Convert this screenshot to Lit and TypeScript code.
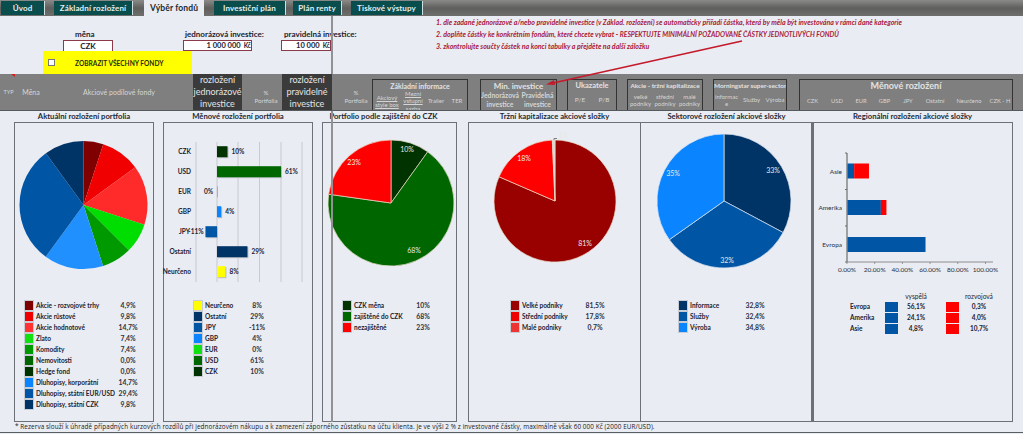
import { LitElement, html, css, svg } from "lit";
import { customElement } from "lit/decorators.js";

const C = { dred: "#7f0000", red: "#f00000", lred: "#ff2a2a", lime: "#00e000", green2: "#009900", green: "#006600", dgreen: "#003300", sky: "#0a84ff", blue: "#0055a5", navy: "#003366", yellow: "#ffff00" };

type Slice = [number, string];
type Lab = [string, number, number];

function pie(cx: number, cy: number, r: number, slices: Slice[], sep: string, labels: Lab[] = []) {
  const total = slices.reduce((a, s) => a + s[0], 0);
  let acc = 0;
  const paths = slices.filter((s) => s[0] > 0).map(([v, col]) => {
    const a0 = (acc / total) * 2 * Math.PI;
    acc += v;
    const a1 = (acc / total) * 2 * Math.PI;
    const p = (a: number) => `${(cx + r * Math.sin(a)).toFixed(2)} ${(cy - r * Math.cos(a)).toFixed(2)}`;
    const large = a1 - a0 > Math.PI ? 1 : 0;
    return svg`<path d="M${cx} ${cy}L${p(a0)}A${r} ${r} 0 ${large} 1 ${p(a1)}Z" fill=${col} stroke=${sep} stroke-width=${sep === "none" ? 0 : 0.7}></path>`;
  });
  const ls = labels.map(([t, x, y]) => svg`<text class="pl" x=${x} y=${y} text-anchor="middle">${t}</text>`);
  return svg`${paths}${ls}`;
}

function chart(x0: number, w: number, h: number, content: unknown) {
  return html`<svg class="chart" width=${w} height=${h} viewBox="${x0} 123 ${w} ${h}">${content}</svg>`;
}

const bars: [string, number, string][] = [
  ["CZK", 10, C.dgreen], ["USD", 61, C.green], ["EUR", 0, C.lime], ["GBP", 4, C.sky],
  ["JPY", -11, C.blue], ["Ostatní", 29, C.navy], ["Neurčeno", 8, C.yellow],
];

function barChart() {
  const grid = [196, 217, 238, 259.5, 281, 302].map((x) => svg`<line x1=${x} x2=${x} y1="142" y2="282" stroke="#bfc1c4" stroke-width="0.8"></line>`);
  const rows = bars.map(([n, v, col], i) => {
    const y = 151.7 + i * 20;
    const bx = v < 0 ? 217 + v * 1.05 : 217;
    const bw = Math.abs(v) * 1.05;
    return svg`
      <rect x=${bx + 1} y=${y - 4.5} width=${bw} height="11" fill="#b9bec6"></rect>
      <rect x=${bx} y=${y - 5.5} width=${Math.max(bw, 0.5)} height="11" fill=${col}></rect>
      <text class="bl" x=${i === 4 ? 190 : 191} y=${y + 2} text-anchor="end">${n}</text>
      ${v < 0
        ? svg`<text class="bl" x="203.5" y=${y + 2.4} text-anchor="end">${v}%</text>`
        : v === 0
        ? svg`<text class="bl" x="213" y=${y + 2.4} text-anchor="end">0%</text>`
        : svg`<text class="bl" x=${217 + bw + 4} y=${y + 2.4}>${v}%</text>`}`;
  });
  return svg`${grid}${rows}`;
}

function regional() {
  const sc = 1.385;
  const data: [string, number, number, number][] = [["Asie", 171, 4.8, 10.7], ["Amerika", 207.5, 24.1, 4], ["Evropa", 244.5, 56.1, 0.3]];
  const ticks = [0, 20, 40, 60, 80, 100];
  return svg`
    <line x1="847" x2="847" y1="153" y2="262" stroke="#555" stroke-width="1"></line>
    <line x1="847" x2="993" y1="262" y2="262" stroke="#777" stroke-width="0.8"></line>
    ${[153, 189.5, 226, 262].map((y) => svg`<line x1="845" x2="847" y1=${y} y2=${y} stroke="#555" stroke-width="0.8"></line>`)}
    ${ticks.map((t) => svg`
      <line x1=${847 + t * sc} x2=${847 + t * sc} y1="262" y2="264" stroke="#777" stroke-width="0.7"></line>
      <text class="rl" x=${847 + t * sc} y="271.5" text-anchor="middle">${t}.00%</text>`)}
    ${data.map(([n, y, a, b]) => svg`
      <text class="rl" x="842" y=${y + 2.5} text-anchor="end">${n}</text>
      <rect x="847.5" y=${y - 7.5} width=${a * sc} height="15" fill=${C.blue}></rect>
      <rect x=${847.5 + a * sc} y=${y - 7.5} width=${b * sc} height="15" fill="#ff0000"></rect>`)}`;
}

type Row = [string, string, string];
const leg1: Row[] = [
  [C.dred, "Akcie - rozvojové trhy", "4,9%"], ["#ee0000", "Akcie růstové", "9,8%"], ["#ff3333", "Akcie hodnotové", "14,7%"],
  ["#11e011", "Zlato", "7,4%"], [C.green2, "Komodity", "7,4%"], [C.green, "Nemovitosti", "0,0%"], [C.dgreen, "Hedge fond", "0,0%"],
  [C.sky, "Dluhopisy, korporátní", "14,7%"], [C.blue, "Dluhopisy, státní EUR/USD", "29,4%"], [C.navy, "Dluhopisy, státní CZK", "9,8%"],
];
const leg2: Row[] = [
  [C.yellow, "Neurčeno", "8%"], [C.navy, "Ostatní", "29%"], [C.blue, "JPY", "-11%"], [C.sky, "GBP", "4%"],
  ["#11e011", "EUR", "0%"], [C.green, "USD", "61%"], [C.dgreen, "CZK", "10%"],
];
const leg3: Row[] = [[C.dgreen, "CZK měna", "10%"], [C.green, "zajištěné do CZK", "68%"], ["#ff0000", "nezajištěné", "23%"]];
const leg4: Row[] = [["#990000", "Velké podniky", "81,5%"], ["#ee0000", "Střední podniky", "17,8%"], ["#ee3333", "Malé podniky", "0,7%"]];
const leg5: Row[] = [[C.navy, "Informace", "32,8%"], [C.blue, "Služby", "32,4%"], [C.sky, "Výroba", "34,8%"]];

function legend(rows: Row[], left: number, textW: number) {
  return html`<div class="legend" style="margin-left:${left}px;grid-template-columns:10px ${textW}px 28px">
    ${rows.map(([c, t, v]) => html`<span class="sw" style="background:${c}"></span><span class="lt">${t}</span><span class="lv">${v}</span>`)}
  </div>`;
}

const tabs: [string, number, number, boolean][] = [
  ["Úvod", 44, 1, false], ["Základní rozložení", 79, 9, false], ["Výběr fondů", 60, 11, true],
  ["Investiční plán", 72, 10, false], ["Plán renty", 49, 7, false], ["Tiskové výstupy", 72, 9, false],
];

const groups = [
  { cls: "g1", title: "Základní informace", cols: [["Akciový", "style box"], ["Mezní", "vstupní", "sazba"], ["Trailer"], ["TER"]] },
  { cls: "g2", title: "Min. investice", cols: [["Jednorázová", "investice"], ["Pravidelná", "investice"]] },
  { cls: "g3", title: "Ukazatele", cols: [["P/E"], ["P/B"]] },
  { cls: "g4", title: "Akcie - tržní kapitalizace", cols: [["velké", "podniky"], ["střední", "podniky"], ["malé", "podniky"]] },
  { cls: "g5", title: "Morningstar super-sector", cols: [["informac", "e"], ["Služby"], ["Výroba"]] },
  { cls: "g6", title: "Měnové rozložení", cols: [["CZK"], ["USD"], ["EUR"], ["GBP"], ["JPY"], ["Ostatní"], ["Neurčeno"], ["CZK - H"]] },
];

@customElement("app-root")
export class AppRoot extends LitElement {
  static styles = css`
    :host { display: block; position: relative; width: 1023px; height: 434px; overflow: hidden; background: #e9ecf3; font-family: "Lato", "Liberation Sans", sans-serif; color: #1c2230; }
    * { box-sizing: border-box; }
    .tabs { display: flex; height: 16px; background: linear-gradient(#8a8a88, #5f5f5e 50%, #6e6e6d); }
    .tab { height: 14px; margin-top: 1px; background: #0a4d4d; color: #e4eeee; font-size: 8px; font-weight: 700; letter-spacing: .12px; display: flex; align-items: center; justify-content: center; white-space: nowrap; border-right: 1px solid #cfe0e0; }
    .tab.on { background: #e9ecf3; color: #1c2a30; height: 16px; margin-top: 0; border: 0; font-size: 8.5px; }
    .top { display: flex; height: 58px; }
    .form { width: 332px; display: flex; flex-direction: column; }
    .fields { display: flex; padding-top: 13px; height: 35px; }
    .f { display: flex; flex-direction: column; font-size: 8px; font-weight: 700; white-space: nowrap; }
    .f1 { margin-left: 63px; width: 50px; }
    .f2 { margin-left: 70px; width: 69px; }
    .f3 { margin-left: 29px; width: 50px; }
    .f label { height: 11px; line-height: 11px; }
    .f1 label { padding-left: 12px; }
    .f2 label { padding-left: 2px; }
    .f3 label { padding-left: 3px; }
    .inp { height: 12px; background: #fff; border: 1px solid #8b3a4a; font-size: 7.5px; display: flex; align-items: center; justify-content: flex-end; gap: 3px; padding-right: 0; }
    .inp.c { justify-content: center; font-size: 8px; }
    .inp small { font-size: 6.5px; }
    .yellow { margin-left: 43px; width: 149px; height: 23px; background: #ffff00; display: flex; align-items: center; font-size: 6.6px; font-weight: 700; color: #2a2a10; }
    .yellow i { width: 7px; height: 7px; margin: 0 20px 0 5px; background: #fff; border: 1px solid #777; }
    .notes { padding-left: 104px; font-size: 7.02px; font-style: italic; font-weight: 700; color: #a8203a; }
    .notes div { height: 12px; line-height: 12px; white-space: nowrap; }
    .notes b { font-weight: 700; font-size: 6.7px; }

    .head { position: relative; z-index: 1; display: flex; height: 36px; background: #7f7f7f; color: #d6d6d6; }
    .hc { display: flex; align-items: center; justify-content: center; text-align: center; font-size: 7px; white-space: nowrap; }
    .h1 { width: 17px; font-size: 5.5px; }
    .h2 { width: 28px; }
    .h3 { width: 148px; }
    .dark { width: 49px; background: #3b3b3b; color: #e4e4e4; font-size: 9px; line-height: 11.7px; }
    .dark.d2 { width: 50px; }
    .pct { width: 40px; padding-left: 8px; font-size: 6.2px; line-height: 8px; padding-top: 10px; }
    .groups { display: flex; align-items: flex-start; }
    .grp { height: 31px; margin-top: 5px; border: 1px solid #333; border-bottom: 0; overflow: hidden; display: flex; flex-direction: column; text-align: center; }
    .grp h4 { margin: 0; font-size: 7px; font-weight: 700; color: #e2e2e2; line-height: 10px; height: 10px; padding-top: 1px; white-space: nowrap; }
    .cols { display: grid; flex: 1; align-items: center; font-size: 6px; line-height: 7.3px; }
    .cols span { display: block; white-space: nowrap; }
    .g1 { width: 96px; margin-right: 12px; } .g1 .cols { grid-template-columns: 28px 24px 22px 20px; }
    .g1 .cols > div:nth-child(-n+2) { text-decoration: underline; }
    .g1 .cols > div:nth-child(2) { align-self: start; }
    .g2 { width: 77px; margin-right: 10px; } .g2 .cols { grid-template-columns: 38px 37px; font-size: 6.8px; font-weight: 700; line-height: 9px; }
    .g2 h4 { font-size: 8px; }
    .g3 { width: 50px; margin-right: 10px; } .g3 .cols { grid-template-columns: 24px 24px; font-size: 6.5px; }
    .g3 h4 { font-size: 7.5px; }
    .g4 { width: 76px; margin-right: 10px; } .g4 .cols { grid-template-columns: 25px 24px 25px; }
    .g4 h4 { font-size: 6.4px; }
    .g5 { width: 74px; margin-right: 12px; } .g5 .cols { grid-template-columns: 25px 25px 22px; }
    .g5 h4 { font-size: 6.4px; }
    .g6 { width: 214px; } .g6 .cols { grid-template-columns: 25px 24px 24px 23px 24px 30px 38px 24px; font-size: 5.8px; }
    .g6 h4 { font-size: 9px; height: 12px; }

    .main { display: grid; grid-template-columns: 149px 159px 146px 173px 171px 201px; margin-left: 14px; }
    .rule { position: relative; z-index: 1; height: 1px; background: #555a5f; }
    .col { display: flex; flex-direction: column; }
    .c1 { width: 140px; } .c2 { width: 150px; } .c3 { width: 135px; }
    .title { height: 11px; line-height: 11px; font-size: 7.7px; font-weight: 700; text-align: center; white-space: nowrap; color: #222a36; }
    .c3 .title { padding-right: 12px; }
    .panel { height: 300px; border: 1px solid #6b7176; }
    .p5 { border-left: 0; }
    .p6 { border-left: 2px solid #6b7176; }
    .chart { display: block; overflow: visible; }
    .chart text { font-family: "Lato", sans-serif; }
    .pl { font-size: 7px; fill: #e8e8e8; }
    .bl { font-size: 6.5px; font-weight: 700; fill: #1c2230; }
    .rl { font-size: 6.5px; fill: #2a3040; }
    .legend { display: grid; grid-auto-rows: 11px; }
    .sw { height: 11px; border: .5px solid #c8ccd4; }
    .lt { padding-left: 2px; font-size: 6.5px; font-weight: 700; line-height: 11px; white-space: nowrap; }
    .lv { text-align: center; font-size: 6.8px; font-weight: 700; line-height: 11px; color: #2a3040; }
    .reg { display: grid; margin-left: 36px; grid-template-columns: 35px 13px 36px 12px 13px 40px; grid-auto-rows: 11px; align-items: center; font-size: 6.5px; font-weight: 700; }
    .reg .hd { font-weight: 400; text-align: center; font-size: 6.6px; }
    .reg .v { text-align: center; }
    .reg .sq { height: 10px; }
    .foot { height: 10px; margin-left: 15px; font-family: "Open Sans", sans-serif; font-size: 6.35px; line-height: 10px; white-space: nowrap; color: #222; letter-spacing: .09px; }
    .endline { height: 1px; background: #5a5f63; }
    .freeze { position: absolute; left: 331px; top: 16px; width: 2px; height: 406px; background: #909296; }
    .arrow { position: absolute; z-index: 2; left: 0; top: 0; pointer-events: none; }
    .flag { position: absolute; z-index: 2; left: 11px; top: 74px; width: 0; height: 0; border-top: 3px solid #d02020; border-left: 4px solid transparent; }
  `;

  render() {
    return html`
      <div class="tabs">
        ${tabs.map(([t, w, m, on]) => html`<div class="tab ${on ? "on" : ""}" style="width:${w}px;margin-left:${m}px">${t}</div>`)}
      </div>
      <div class="top">
        <div class="form">
          <div class="fields">
            <div class="f f1"><label>měna</label><div class="inp c">CZK</div></div>
            <div class="f f2"><label>jednorázová investice:</label><div class="inp"><span>1 000 000</span><small>Kč</small></div></div>
            <div class="f f3"><label>pravidelná investice:</label><div class="inp"><span>10 000</span><small>Kč</small></div></div>
          </div>
          <div class="yellow"><i></i>ZOBRAZIT VŠECHNY FONDY</div>
        </div>
        <div class="notes">
          <div>1. dle zadané jednorázové a/nebo pravidelné investice (v Základ. rozložení) se automaticky přiřadí částka, která by měla být investována v rámci dané kategorie</div>
          <div>2. doplňte částky ke konkrétním fondům, které chcete vybrat - <b>RESPEKTUJTE MINIMÁLNÍ POŽADOVANÉ ČÁSTKY JEDNOTLIVÝCH FONDŮ</b></div>
          <div>3. zkontrolujte součty částek na konci tabulky a přejděte na další záložku</div>
        </div>
      </div>
      <div class="head">
        <div class="hc h1">TYP</div><div class="hc h2">Měna</div><div class="hc h3">Akciové podílové fondy</div>
        <div class="hc dark">rozložení<br />jednorázové<br />investice</div>
        <div class="hc pct">%<br />Portfolia</div>
        <div class="hc dark d2">rozložení<br />pravidelné<br />investice</div>
        <div class="hc pct">%<br />Portfolia</div>
        <div class="groups">
          ${groups.map((g) => html`<div class="grp ${g.cls}"><h4>${g.title}</h4>
            <div class="cols">${g.cols.map((c) => html`<div>${c.map((l) => html`<span>${l}</span>`)}</div>`)}</div></div>`)}
        </div>
      </div>
      <div class="rule"></div>
      <div class="main">
        <div class="col c1"><div class="title">Aktuální rozložení portfolia</div>
          <div class="panel">
            ${chart(15, 138, 177, pie(83.5, 205, 64, [[4.9, C.dred], [9.8, C.red], [14.7, C.lred], [7.4, "#00dd00"], [7.4, C.green2], [14.7, "#2090ff"], [29.4, C.blue], [9.8, C.navy]], "none"))}
            ${legend(leg1, 9, 80)}
          </div></div>
        <div class="col c2"><div class="title">Měnové rozložení portfolia</div>
          <div class="panel">
            ${chart(164, 148, 177, barChart())}
            ${legend(leg2, 29, 40)}
          </div></div>
        <div class="col c3"><div class="title">Portfolio podle zajištění do CZK</div>
          <div class="panel">
            ${chart(323, 133, 177, pie(391, 203, 63, [[10, C.dgreen], [68, C.green], [23, "#ff0000"]], "#e8dcc8", [["10%", 407, 152], ["68%", 414, 252.5], ["23%", 354, 164.5]]))}
            ${legend(leg3, 19, 57)}
          </div></div>
        <div class="col"><div class="title">Tržní kapitalizace akciové složky</div>
          <div class="panel">
            ${chart(469, 171, 177, svg`${pie(555, 201, 61, [[81.5, "#990000"], [17.8, "#ff0000"], [0.7, "#d8d8d8"]], "#e8dcc8", [["81%", 585, 245.5], ["18%", 524, 160.5]])}
              <path d="M554 140V138.5H557" fill="none" stroke="#555" stroke-width=".7"></path><text class="pl" x="563" y="138" text-anchor="middle">1%</text>`)}
            ${legend(leg4, 41, 61)}
          </div></div>
        <div class="col"><div class="title">Sektorové rozložení akciové složky</div>
          <div class="panel p5">
            ${chart(641, 170, 177, pie(724, 201, 67, [[32.8, C.navy], [32.4, C.blue], [34.8, C.sky]], "#dfe6f0", [["33%", 773, 173], ["32%", 727, 262.5], ["35%", 673, 176]]))}
            ${legend(leg5, 37, 53)}
          </div></div>
        <div class="col"><div class="title">Regionální rozložení akciové složky</div>
          <div class="panel p6">
            ${chart(814, 198, 167, regional())}
            <div class="reg">
              <span></span><span></span><span class="hd">vyspělá</span><span></span><span></span><span class="hd">rozvojová</span>
              ${([["Evropa", "56,1%", "0,3%"], ["Amerika", "24,1%", "4,0%"], ["Asie", "4,8%", "10,7%"]] as string[][]).map(([n, a, b]) => html`
                <span>${n}</span><span class="sq" style="background:${C.blue}"></span><span class="v">${a}</span><span></span><span class="sq" style="background:#ff0000"></span><span class="v">${b}</span>`)}
            </div>
          </div></div>
      </div>
      <div class="foot">* Rezerva slouží k úhradě případných kurzových rozdílů při jednorázovém nákupu a k zamezení záporného zůstatku na účtu klienta. Je ve výši 2 % z investované částky, maximálně však 60 000 Kč (2000 EUR/USD).</div>
      <div class="endline"></div>
      <div class="freeze"></div>
      <div class="flag"></div>
      <svg class="arrow" width="1023" height="110" viewBox="0 0 1023 110">
        <line x1="742" y1="41" x2="553" y2="83" stroke="#c41a2a" stroke-width="1.5"></line>
        <path d="M546 84.5L554 80L555 85Z" fill="#c41a2a"></path>
      </svg>
    `;
  }
}
